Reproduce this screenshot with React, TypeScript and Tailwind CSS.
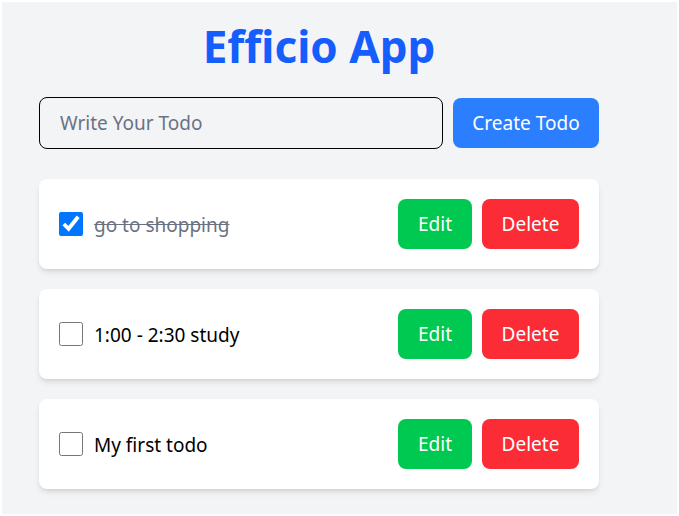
import { useState } from "react";

type Todo = { id: number; text: string; done: boolean };

const initialTodos: Todo[] = [
    { id: 1, text: "go to shopping", done: true },
    { id: 2, text: "1:00 - 2:30 study", done: false },
    { id: 3, text: "My first todo", done: false },
];

export default function App() {
    const [todos, setTodos] = useState<Todo[]>(initialTodos);
    const [todo, setTodo] = useState("");

    const toggle = (id: number) =>
        setTodos(todos.map(t => (t.id === id ? { ...t, done: !t.done } : t)));

    return (
        <div className="bg-white p-[2px] font-['Noto_Sans',sans-serif]">
            <div className="h-[512px] bg-gray-100 pl-[37px] pt-[14px]">
                <div className="w-[560px]">
                    <h1 className="text-center text-[44px] font-bold text-blue-600 leading-[60px]">Efficio App</h1>

                    <div className="mt-[21px] flex items-center gap-2.5">
                        <input
                            type="text"
                            value={todo}
                            onChange={e => setTodo(e.target.value)}
                            placeholder="Write Your Todo"
                            className="w-[404px] h-[52px] px-5 text-[19px] rounded-lg border border-black bg-gray-100 placeholder:text-gray-500 focus:outline-none"
                        />
                        <button className="h-[50px] w-[146px] rounded-lg bg-blue-500 text-[19px] text-white">Create Todo</button>
                    </div>

                    <div className="mt-[30px] flex flex-col gap-5">
                        {todos.map(t => (
                            <div key={t.id} className="flex items-center justify-between rounded-lg bg-white p-5 shadow-md">
                                <div className="flex items-center gap-[11px]">
                                    <input
                                        type="checkbox"
                                        checked={t.done}
                                        onChange={() => toggle(t.id)}
                                        className="w-6 h-6"
                                    />
                                    <span className={`text-[19px] leading-7 pt-0.5 ${t.done ? "line-through text-gray-500" : "text-black"}`}>
                                        {t.text}
                                    </span>
                                </div>
                                <div className="flex gap-2.5">
                                    <button className="h-[50px] w-[74px] rounded-lg bg-green-500 text-[19px] text-white">Edit</button>
                                    <button className="h-[50px] w-[97px] rounded-lg bg-red-500 text-[19px] text-white">Delete</button>
                                </div>
                            </div>
                        ))}
                    </div>
                </div>
            </div>
        </div>
    );
}
